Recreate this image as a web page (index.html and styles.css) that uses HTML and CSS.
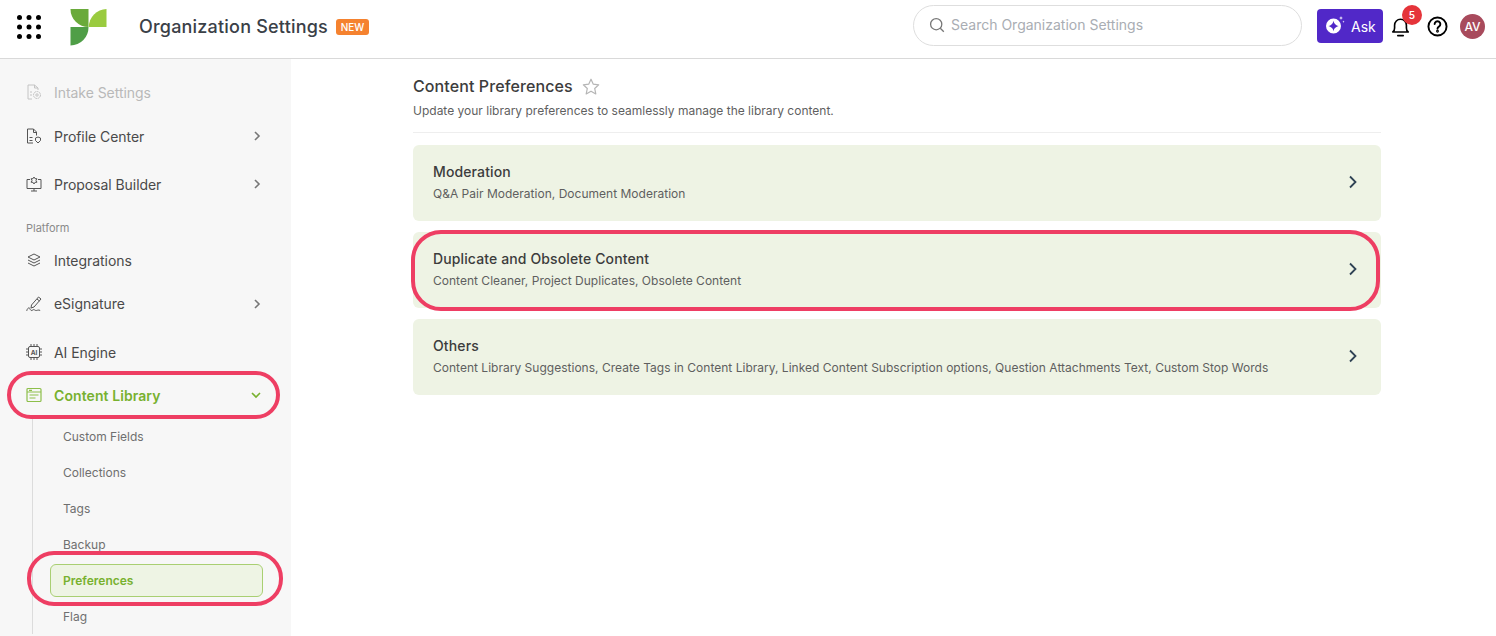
FILE: index.html
```html
<!DOCTYPE html>
<html lang="en">
<head>
<meta charset="utf-8">
<title>Organization Settings</title>
<link rel="stylesheet" href="styles.css">
</head>
<body>
<header class="topbar">
  <svg class="apps" width="24" height="24" viewBox="0 0 24 24"><g fill="#000"><circle cx="2.500" cy="2.500" r="2.500"/><circle cx="12" cy="2.500" r="2.500"/><circle cx="21.500" cy="2.500" r="2.500"/><circle cx="2.500" cy="12" r="2.500"/><circle cx="12" cy="12" r="2.500"/><circle cx="21.500" cy="12" r="2.500"/><circle cx="2.500" cy="21.500" r="2.500"/><circle cx="12" cy="21.500" r="2.500"/><circle cx="21.500" cy="21.500" r="2.500"/></g></svg>
  <svg class="logo" width="37" height="37" viewBox="0 0 37 37"><path fill="#6aaa3b" d="M.5 0H18.500V18A18 18 0 0 1 .5 0Z"/><path fill="#9acb3f" d="M36.500 0V18H18.800A18 18 0 0 1 36.500 0Z"/><path fill="#4f9e47" d="M.5 18H18.500A18 18 0 0 1 .5 36.500Z"/></svg>
  <h1 class="app-title">Organization Settings</h1>
  <span class="new-badge">NEW</span>
  <div class="search">
    <svg width="16" height="16" viewBox="0 0 16 16" fill="none" stroke="#777" stroke-width="1.300"><circle cx="7.200" cy="7.200" r="5.600"/><path d="M11.300 11.300L14.800 14.800"/></svg>
    <span class="search-text">Search Organization Settings</span>
  </div>
  <button class="ask">
    <svg width="20" height="20" viewBox="0 0 20 20"><path fill="#fff" fill-rule="evenodd" d="M8.500 2.500a7.500 7.500 0 1 1 0 15 7.500 7.500 0 0 1 0-15Zm0 2.200c-.5 2.300-1.200 3-1.800 3.500-.6.500-1.300 1.300-3.400 1.800 2.100.5 2.800 1.300 3.400 1.800.6.500 1.300 1.200 1.800 3.500.5-2.300 1.200-3 1.800-3.500.6-.5 1.300-1.300 3.400-1.800-2.100-.5-2.800-1.300-3.400-1.800-.6-.5-1.300-1.200-1.800-3.500Z"/><path fill="#fff" d="M16 0l.5 1.500 1.500.5-1.500.5-.5 1.500-.5-1.500-1.500-.5 1.500-.5ZM18.500 4.500l.3.9.9.3-.9.3-.3.9-.3-.9-.9-.3.9-.3Z"/></svg>
    <span>Ask</span>
  </button>
  <div class="bell">
    <svg width="19" height="20" viewBox="0 0 20 22" fill="none" stroke="#000" stroke-width="1.800"><path d="M1.500 16.500c1.500-1 2-2.500 2-4.500V9a6.500 6.500 0 0 1 13 0v3c0 2 .5 3.500 2 4.500Z" stroke-linejoin="round"/><path d="M7 20.500h6" stroke-linecap="round"/></svg>
    <span class="count">5</span>
  </div>
  <svg class="help" width="21" height="21" viewBox="0 0 22 22" fill="none" stroke="#000" stroke-width="2"><circle cx="11" cy="11" r="9.500"/><path d="M8 8.500a3 3 0 1 1 4.500 2.600c-1 .6-1.500 1.100-1.500 2.200" stroke-linecap="round"/><circle cx="11" cy="16" r=".5" fill="#000"/></svg>
  <span class="avatar">AV</span>
</header>

<div class="shell">
  <nav class="sidebar">
    <a class="item disabled">
      <svg class="ico" width="16" height="16" viewBox="0 0 16 16" fill="none" stroke="currentColor"><path d="M6 15H2V1h6.500L12 4v2"/><path d="M8.500 1v3H12M4 8h2M4 11h2"/><circle cx="11" cy="11" r="3.500" stroke-dasharray="2 .6"/><circle cx="11" cy="11" r="1.200"/></svg>
      <span class="label">Intake Settings</span>
    </a>
    <a class="item tall">
      <svg class="ico" width="16" height="16" viewBox="0 0 16 16" fill="none" stroke="currentColor"><path d="M7 15H1.500V1h6l3 3v3.500"/><path d="M7.500 1v3.500h3M3.500 9.500h3M3.500 12.500h3"/><path d="M12 9l2.500 1v2.500L12 15l-2.500-2.500V10Z"/></svg>
      <span class="label">Profile Center</span>
      <svg class="chev" width="8" height="10" viewBox="0 0 8 10" fill="none" stroke="currentColor" stroke-width="1.600"><path d="M2 1l4 4-4 4"/></svg>
    </a>
    <a class="item tall">
      <svg class="ico" width="16" height="16" viewBox="0 0 16 16" fill="none" stroke="currentColor"><path d="M4 3.500H1v9h14v-9h-3M5 15h6M8 12.500V15"/><path d="M8 1l1 1.700 2 .1-1 1.700 1 1.700-2 .1-1 1.700-1-1.700-2-.1 1-1.700-1-1.700 2-.1Z"/></svg>
      <span class="label">Proposal Builder</span>
      <svg class="chev" width="8" height="10" viewBox="0 0 8 10" fill="none" stroke="currentColor" stroke-width="1.600"><path d="M2 1l4 4-4 4"/></svg>
    </a>
    <div class="section">Platform</div>
    <a class="item">
      <svg class="ico" width="16" height="16" viewBox="0 0 16 16" fill="none" stroke="currentColor"><path d="M8 2l6 3-6 3-6-3ZM2 8l6 3 6-3M2 11l6 3 6-3"/></svg>
      <span class="label">Integrations</span>
    </a>
    <a class="item esign">
      <svg class="ico" width="16" height="16" viewBox="0 0 16 16" fill="none" stroke="currentColor"><path d="M5.500 9L12.500 1l2.500 2-7 8-3 1ZM11 3l2.500 2"/><path d="M.8 14.500c.5-2.500 2.500-3.500 3-2 .5 1.500 1.500 2.800 3 1.500 1.500-1.300 2 .8 3.500.5s2-.8 3.500-.2" stroke-linecap="round"/></svg>
      <span class="label">eSignature</span>
      <svg class="chev" width="8" height="10" viewBox="0 0 8 10" fill="none" stroke="currentColor" stroke-width="1.600"><path d="M2 1l4 4-4 4"/></svg>
    </a>
    <a class="item ai">
      <svg class="ico" width="16" height="16" viewBox="0 0 16 16" fill="none" stroke="currentColor"><rect x="2.500" y="2.500" width="11" height="11" rx="1.500"/><path d="M0 5h2.500M0 8h2.500M0 11h2.500M13.500 5H16M13.500 8H16M13.500 11H16M5 0v2.500M8 0v2.500M11 0v2.500M5 13.500V16M8 13.500V16M11 13.500V16"/><text class="ai-chip" x="8" y="10.500" text-anchor="middle">AI</text></svg>
      <span class="label">AI Engine</span>
    </a>
    <a class="item active">
      <svg class="ico" width="16" height="16" viewBox="0 0 16 16" fill="none" stroke="currentColor" stroke-width="1.200"><rect x="1" y="1.500" width="14" height="13" rx="1"/><path d="M1 5h14M3.500 8h9M3.500 11h6M3 3.300h3" /></svg>
      <span class="label">Content Library</span>
      <svg class="chev" width="10" height="8" viewBox="0 0 10 8" fill="none" stroke="currentColor" stroke-width="1.600"><path d="M1 2l4 4 4-4"/></svg>
    </a>
    <ul class="sub">
      <li class="sub-item">Custom Fields</li>
      <li class="sub-item">Collections</li>
      <li class="sub-item">Tags</li>
      <li class="sub-item">Backup</li>
      <li class="sub-item current">Preferences</li>
      <li class="sub-item">Flag</li>
    </ul>
  </nav>

  <main class="main">
    <div class="page-head">
      <h2 class="page-title">Content Preferences</h2>
      <svg width="18" height="17" viewBox="0 0 18 17" fill="none" stroke="#b5b5b5" stroke-width="1.200"><path d="M9 1.200l2.300 5 5.400.6-4 3.700 1.100 5.400L9 13.200l-4.800 2.700 1.100-5.400-4-3.700 5.400-.6Z" stroke-linejoin="round"/></svg>
    </div>
    <p class="page-sub">Update your library preferences to seamlessly manage the library content.</p>
    <div class="cards">
      <section class="card">
        <div class="card-body">
          <h3 class="card-title">Moderation</h3>
          <p class="card-sub">Q&amp;A Pair Moderation, Document Moderation</p>
        </div>
        <svg width="10" height="14" viewBox="0 0 10 14" fill="none" stroke="#2f4254" stroke-width="1.800"><path d="M2 1.500L7.500 7 2 12.500"/></svg>
      </section>
      <section class="card">
        <div class="card-body">
          <h3 class="card-title">Duplicate and Obsolete Content</h3>
          <p class="card-sub">Content Cleaner, Project Duplicates, Obsolete Content</p>
        </div>
        <svg width="10" height="14" viewBox="0 0 10 14" fill="none" stroke="#2f4254" stroke-width="1.800"><path d="M2 1.500L7.500 7 2 12.500"/></svg>
      </section>
      <section class="card">
        <div class="card-body">
          <h3 class="card-title">Others</h3>
          <p class="card-sub">Content Library Suggestions, Create Tags in Content Library, Linked Content Subscription options, Question Attachments Text, Custom Stop Words</p>
        </div>
        <svg width="10" height="14" viewBox="0 0 10 14" fill="none" stroke="#2f4254" stroke-width="1.800"><path d="M2 1.500L7.500 7 2 12.500"/></svg>
      </section>
    </div>
  </main>
</div>

<div class="ring ring-library"></div>
<div class="ring ring-prefs"></div>
<div class="ring ring-card"></div>
</body>
</html>
```

FILE: styles.css
```css
* { box-sizing: border-box; }
html, body { margin: 0; height: 100%; }
body {
  font-family: Inter, "Noto Sans", sans-serif;
  color: #3d3d3d;
  background: #fff;
  overflow: hidden;
  position: relative;
}
h1, h2, h3, p, ul { margin: 0; padding: 0; }

.topbar {
  height: 59px;
  display: flex;
  align-items: center;
  border-bottom: 1px solid #d9d9d9;
  padding: 0 11px 6px 17px;
}
.apps { flex: none; margin-top: 1px; }
.logo { flex: none; margin-left: 29px; margin-top: 2px; }
.app-title { font-size: 18px; font-weight: 500; color: #3a4047; margin-left: 32px; margin-top: 2px; line-height: 24px; letter-spacing: .2px; }
.new-badge {
  margin-left: 8px;
  margin-top: 2px;
  background: #f5822f;
  color: #fff;
  font-size: 10px;
  font-weight: 500;
  line-height: 16px;
  width: 33px;
  text-align: center;
  border-radius: 3px;
}
.search {
  margin-left: auto;
  margin-top: -2px;
  width: 389px;
  height: 41px;
  border: 1px solid #dedede;
  border-radius: 21px;
  display: flex;
  align-items: center;
  gap: 6px;
  padding-left: 15px;
}
.search-text { font-size: 14px; color: #a9adb3; margin-top: -2px; }
.search svg { margin-top: -1px; }
.ask {
  margin-left: 15px;
  width: 66px;
  height: 34px;
  background: #5128c8;
  color: #fff;
  border: 0;
  border-radius: 4px;
  display: flex;
  align-items: center;
  gap: 6px;
  padding: 0 0 0 8px;
  font: 400 14px Inter, sans-serif;
}
.ask span { margin-top: 1px; }
.bell { position: relative; margin-left: 8px; width: 20px; height: 22px; }
.bell svg { display: block; margin-top: 2px; }
.count {
  position: absolute;
  left: 11px;
  top: -10px;
  width: 20px;
  height: 20px;
  border-radius: 50%;
  background: #e5343a;
  color: #fff;
  font-size: 10px;
  font-weight: 600;
  text-align: center;
  line-height: 20px;
}
.help { margin-left: 16px; margin-top: 1px; flex: none; }
.avatar {
  margin-left: 12px;
  width: 25px;
  height: 25px;
  border-radius: 50%;
  background: #a84a5c;
  color: #fff;
  font-size: 12px;
  font-weight: 500;
  text-align: center;
  line-height: 25px;
}

.shell { display: flex; height: 577px; }
.sidebar {
  width: 291px;
  flex: none;
  background: #f7f7f7;
  padding-top: 13px;
  overflow: hidden;
}
.item {
  height: 40px;
  display: flex;
  align-items: center;
  padding: 0 30px 0 26px;
  font-size: 14px;
  letter-spacing: -.05px;
  color: #4a4a4a;
}
.tall { height: 48px; }
.esign { height: 47px; }
.ai { margin-top: 5px; margin-bottom: 3px; }
.ico { flex: none; color: #555; }
.label { margin-left: 12px; flex: 1; }
.chev { flex: none; color: #777; }
.disabled { color: #b9b9b9; }
.disabled .ico { color: #c4c4c4; }
.section { font-size: 11px; line-height: 20px; color: #8a8a8a; padding-left: 26px; margin-top: 10px; margin-bottom: 2px; }
.ai-chip { font: 700 6.500px Inter, sans-serif; fill: currentColor; stroke: none; }
.active { color: #78b12f; font-weight: 600; letter-spacing: .08px; }
.active .chev { color: #78b12f; }
.active .ico { color: #8dbf4a; }

.sub {
  list-style: none;
  margin: 3px 0 0 32px;
  padding: 0 28px 0 17px;
  border-left: 1px solid #dcdcdc;
}
.sub-item {
  height: 36px;
  display: flex;
  align-items: center;
  padding-left: 13px;
  font-size: 12px;
  color: #6f6f6f;
}
.current {
  height: 33px;
  margin: 2px 0 1px;
  background: #eef4e4;
  border: 1px solid #a9cf72;
  border-radius: 6px;
  padding-left: 12px;
  color: #78b12f;
  font-weight: 600;
}

.main { flex: 1; padding: 16px 115px 0 122px; }
.page-head { display: flex; align-items: center; gap: 9px; height: 22px; }
.page-title { font-size: 16px; font-weight: 500; color: #3c3c3c; letter-spacing: .1px; }
.page-sub {
  font-size: 12px;
  line-height: 18px;
  color: #5f5f5f;
  margin-top: 5px;
  padding-bottom: 12px;
  border-bottom: 1px solid #eeeeee;
}
.cards { display: flex; flex-direction: column; gap: 11px; margin-top: 12px; }
.card {
  height: 76px;
  background: #eef3e4;
  border-radius: 6px;
  display: flex;
  align-items: center;
  justify-content: space-between;
  padding: 0 23px 2px 20px;
}
.card-title { font-size: 14px; font-weight: 500; color: #3c3c3c; line-height: 20px; letter-spacing: .12px; }
.card-sub { font-size: 12px; color: #5f5f5f; line-height: 18px; margin-top: 3px; letter-spacing: .015px; }

.ring { position: absolute; border: 4px solid #ee3e63; }
.ring-library { left: 7px; top: 371px; width: 273px; height: 48px; border-radius: 24px; }
.ring-prefs { left: 27px; top: 551px; width: 256px; height: 55px; border-radius: 27px; }
.ring-card { left: 411px; top: 230px; width: 969px; height: 81px; border-radius: 30px; }
```
